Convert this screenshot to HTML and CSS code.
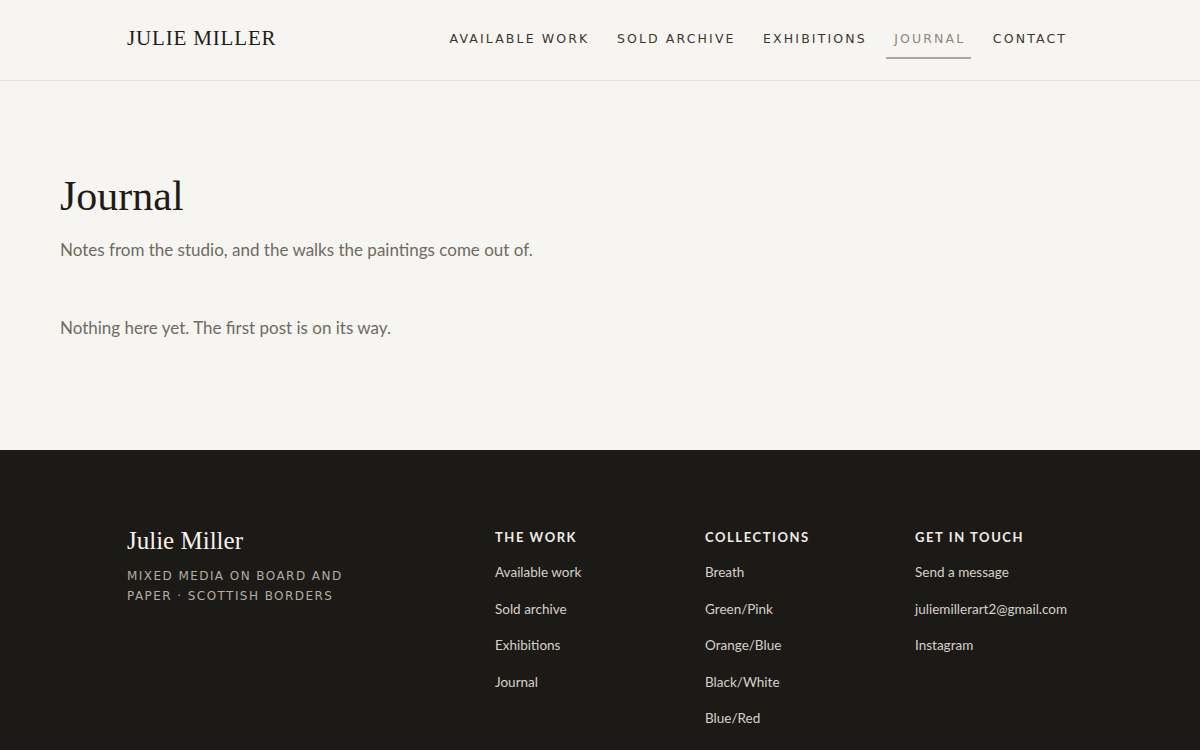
FILE: index.html
```html
<!DOCTYPE html>
<html lang="en">
<head>
<meta charset="utf-8">
<title>Journal — Julie Miller</title>
<link rel="stylesheet" href="styles.css">
</head>
<body>
<header class="site-header">
  <div class="header-inner">
    <a class="logo" href="#">JULIE MILLER</a>
    <nav class="nav">
      <a class="nav-link" href="#">AVAILABLE WORK</a>
      <a class="nav-link" href="#">SOLD ARCHIVE</a>
      <a class="nav-link" href="#">EXHIBITIONS</a>
      <a class="nav-link active" href="#">JOURNAL</a>
      <a class="nav-link" href="#">CONTACT</a>
    </nav>
  </div>
</header>
<main class="main">
  <h1 class="page-title">Journal</h1>
  <p class="lede">Notes from the studio, and the walks the paintings come out of.</p>
  <p class="empty">Nothing here yet. The first post is on its way.</p>
</main>
<footer class="site-footer">
  <div class="footer-inner">
    <div class="brand">
      <div class="brand-name">Julie Miller</div>
      <div class="brand-tag">MIXED MEDIA ON BOARD AND<br>PAPER · SCOTTISH BORDERS</div>
    </div>
    <div class="col">
      <h4 class="col-title">THE WORK</h4>
      <a href="#">Available work</a>
      <a href="#">Sold archive</a>
      <a href="#">Exhibitions</a>
      <a href="#">Journal</a>
    </div>
    <div class="col">
      <h4 class="col-title">COLLECTIONS</h4>
      <a href="#">Breath</a>
      <a href="#">Green/Pink</a>
      <a href="#">Orange/Blue</a>
      <a href="#">Black/White</a>
      <a href="#">Blue/Red</a>
    </div>
    <div class="col">
      <h4 class="col-title">GET IN TOUCH</h4>
      <a href="#">Send a message</a>
      <a href="#">juliemillerart2@gmail.com</a>
      <a href="#">Instagram</a>
    </div>
  </div>
</footer>
</body>
</html>
```
FILE: styles.css
```css
* { box-sizing: border-box; }
html, body { margin: 0; padding: 0; }
body {
  background: #f7f5f1;
  color: #1f1c18;
  font-family: "Lato", "Open Sans", sans-serif;
}
a { text-decoration: none; color: inherit; }

.site-header {
  height: 81px;
  border-bottom: 1px solid #e6e3de;
}
.header-inner {
  max-width: 946px;
  margin: 0 auto;
  height: 80px;
  display: flex;
  align-items: center;
  justify-content: space-between;
}
.logo {
  font-family: "Liberation Serif", "DejaVu Serif", serif;
  font-size: 21px;
  letter-spacing: 0.04em;
  color: #1f1c18;
  margin-top: -4px;
}
.nav {
  display: flex;
  gap: 13.5px;
}
.nav-link {
  font-family: "DejaVu Sans", sans-serif;
  font-size: 12.5px;
  line-height: 16px;
  letter-spacing: 0.17em;
  color: #3a3630;
  padding: 10px 6px 10px 8px;
  border-bottom: 2px solid transparent;
}
.nav-link.active {
  color: #8c8780;
  border-bottom-color: #aaa6a0;
}

.main {
  height: 369px;
  padding: 90px 60px 0;
}
.page-title {
  font-family: "Liberation Serif", "DejaVu Serif", serif;
  font-weight: 400;
  font-size: 42px;
  line-height: 1.2;
  margin: 0 0 16px;
  color: #1f1c18;
}
.lede, .empty {
  font-size: 17px;
  line-height: 1.5;
  color: #6e6a64;
  margin: 0;
}
.empty { margin-top: 52px; }

.site-footer {
  background: #1c1a17;
  height: 300px;
  padding-top: 76px;
}
.footer-inner {
  max-width: 946px;
  margin: 0 auto;
  display: grid;
  grid-template-columns: 2fr 1fr 1fr 1fr;
  gap: 52px;
}
.brand-name {
  font-family: "Liberation Serif", "DejaVu Serif", serif;
  font-size: 25px;
  color: #f5f2ec;
  line-height: 1.2;
  margin-bottom: 10px;
}
.brand-tag {
  font-family: "DejaVu Sans", sans-serif;
  font-size: 12px;
  line-height: 20px;
  letter-spacing: 0.12em;
  color: #b3ada4;
}
.col {
  display: flex;
  flex-direction: column;
  padding-top: 1px;
}
.col-title {
  font-family: "Lato", sans-serif;
  font-weight: 700;
  font-size: 13px;
  letter-spacing: 0.12em;
  color: #f0ece5;
  margin: 0 0 8px;
  line-height: 20px;
}
.col a {
  font-size: 13.5px;
  line-height: 20px;
  color: #d6d1ca;
  padding: 7px 0 9.5px;
}
```
